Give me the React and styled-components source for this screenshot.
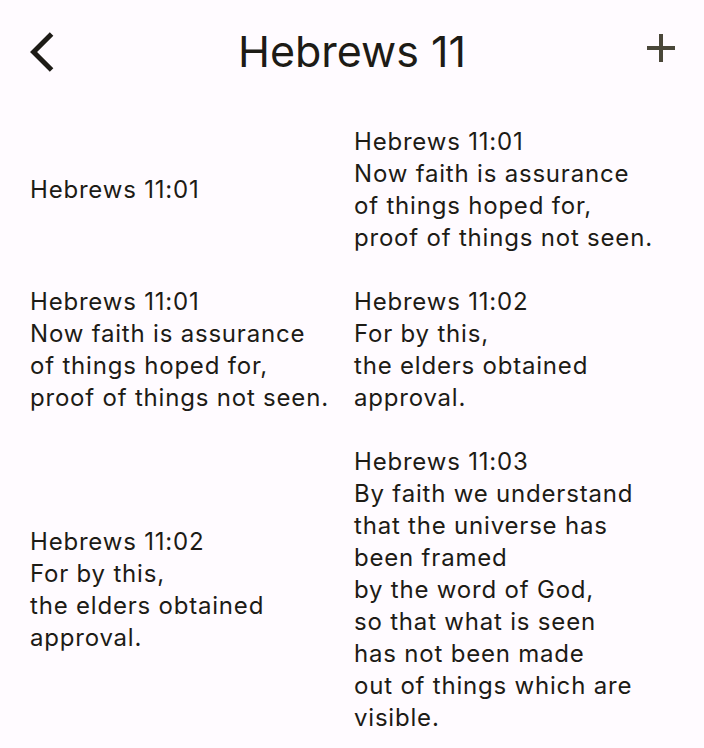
import React from "react";
import styled, { createGlobalStyle } from "styled-components";

const GlobalStyle = createGlobalStyle`
    html, body {
        margin: 0;
        padding: 0;
        background: #fffbff;
    }
    body {
        font-family: Inter, "Noto Sans", sans-serif;
        color: #1d1b16;
    }
`;

const Page = styled("div")`
    width: 704px;
    min-height: 748px;
    background: #fffbff;
`;

const Header = styled("header")`
    display: grid;
    grid-template-columns: 1fr auto 1fr;
    align-items: start;
    height: 96px;
    padding: 24px 19px 0;
    box-sizing: border-box;
`;

const IconButton = styled("button")`
    width: 48px;
    height: 48px;
    padding: 0;
    border: none;
    background: none;
    display: flex;
    justify-self: ${(p) => (p.$end ? "end" : "start")};
    margin-left: ${(p) => (p.$end ? "0" : "11px")};
    margin-top: ${(p) => (p.$end ? "0" : "4px")};
    color: ${(p) => (p.$end ? "#4a4739" : "#1d1b16")};
    cursor: pointer;
`;

const Title = styled("h1")`
    margin: 3px 0 0;
    font-size: 43px;
    line-height: 48px;
    font-weight: 400;
    letter-spacing: 0;
`;

const VerseGrid = styled("main")`
    display: grid;
    grid-template-columns: 1fr 1fr;
    column-gap: 4px;
    row-gap: 32px;
    align-items: center;
    padding: 30px 30px 0;
`;

const Verse = styled("div")`
    font-size: 24px;
    line-height: 32px;
    letter-spacing: 0.8px;
    white-space: pre-line;
`;

const BackIcon = () => (
    <svg width="48" height="48" viewBox="0 0 24 24" fill="currentColor">
        <path d="M11.67 3.87L9.9 2.1 0 12l9.9 9.9 1.77-1.77L3.54 12z" />
    </svg>
);

const AddIcon = () => (
    <svg width="48" height="48" viewBox="0 0 24 24" fill="currentColor">
        <path d="M19 13h-6v6h-2v-6H5v-2h6V5h2v6h6v2z" />
    </svg>
);

const verses = [
    "Hebrews 11:01",
    "Hebrews 11:01\nNow faith is assurance\nof things hoped for,\nproof of things not seen.",
    "Hebrews 11:01\nNow faith is assurance\nof things hoped for,\nproof of things not seen.",
    "Hebrews 11:02\nFor by this,\nthe elders obtained\napproval.",
    "Hebrews 11:02\nFor by this,\nthe elders obtained\napproval.",
    "Hebrews 11:03\nBy faith we understand\nthat the universe has\nbeen framed\nby the word of God,\nso that what is seen\nhas not been made\nout of things which are\nvisible.",
];

const App = () => (
    <Page>
        <GlobalStyle />
        <Header>
            <IconButton aria-label="Back"><BackIcon /></IconButton>
            <Title>Hebrews 11</Title>
            <IconButton $end aria-label="Add"><AddIcon /></IconButton>
        </Header>
        <VerseGrid>
            {verses.map((text, i) => (
                <Verse key={i}>{text}</Verse>
            ))}
        </VerseGrid>
    </Page>
);

export default App;
